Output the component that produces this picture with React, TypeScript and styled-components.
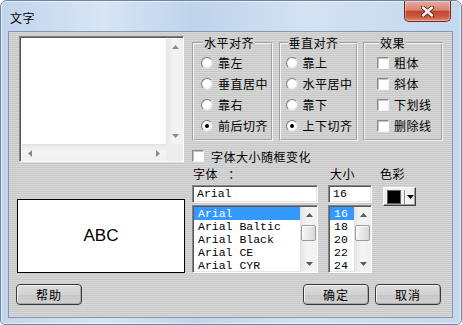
import React from 'react';
import styled, { createGlobalStyle, css } from 'styled-components';

const cjk = `"Noto Sans CJK SC", "Liberation Sans", sans-serif`;
const mono = `"Liberation Mono", "DejaVu Sans Mono", monospace`;

const GlobalStyle = createGlobalStyle`
  html, body { margin: 0; padding: 0; background: #fff; }
  body { font-family: ${cjk}; font-size: 12px; color: #000; }
`;

const sunken = css`
  box-sizing: border-box;
  border: 1px solid;
  border-color: #848484 #fff #fff #848484;
  box-shadow: inset 1px 1px 0 #5a5a5a, inset -1px -1px 0 #e4e4e4;
`;

const Window = styled.div`
  width: 462px;
  height: 325px;
  box-sizing: border-box;
  border: 1px solid #6b86a7;
  border-radius: 7px 7px 5px 5px;
  background: linear-gradient(90deg, #c1d5ec 0%, #d7e5f5 22%, #bfd3eb 42%, #d3e2f3 66%, #c5d8ee 100%);
  display: flex;
  flex-direction: column;
  overflow: hidden;
  box-shadow: inset 0 0 0 1px rgba(255, 255, 255, 0.55);
`;

const TitleBar = styled.div`
  height: 30px;
  flex: none;
  display: flex;
  align-items: flex-start;
  justify-content: space-between;
  padding-left: 9px;
`;

const Title = styled.span`
  font-family: ${cjk};
  font-size: 12px;
  line-height: 14px;
  margin-top: 10px;
  letter-spacing: 0.5px;
`;

const CloseButton = styled.div`
  width: 47px;
  height: 21px;
  margin-right: 10px;
  box-sizing: border-box;
  border: 1px solid #6e2a20;
  border-top: none;
  border-radius: 0 0 5px 5px;
  background: linear-gradient(#eaaa9c, #d98470 45%, #c2452e 52%, #c95b42 80%, #de8c74);
  box-shadow: inset 0 0 0 1px rgba(255, 255, 255, 0.35);
  display: flex;
  align-items: center;
  justify-content: center;
`;

const Client = styled.div`
  flex: 1;
  margin: 0 8px 6px 7px;
  border: 1px solid #8796aa;
  background: repeating-linear-gradient(to bottom, #d8d8d8 0 1px, #c8c8c8 1px 2px);
  display: flex;
  flex-direction: column;
  padding: 4px 0 0 10px;
`;

const Main = styled.div`
  display: flex;
  gap: 8px;
`;

const LeftColumn = styled.div`
  width: 165px;
  display: flex;
  flex-direction: column;
`;

const TextArea = styled.div`
  ${sunken};
  height: 126px;
  background: #fff;
  display: grid;
  grid-template-columns: 1fr 17px;
  grid-template-rows: 1fr 17px;
  padding: 2px 0 0 2px;
`;

const Corner = styled.div`
  background: #ececec;
`;

const Preview = styled.div`
  margin: 37px 0 0 -2px;
  width: 168px;
  height: 74px;
  box-sizing: border-box;
  border: 1px solid #000;
  background: #fff;
  display: flex;
  align-items: center;
  justify-content: center;
  font-family: "Liberation Sans", Arial, sans-serif;
  font-size: 17px;
`;

const RightColumn = styled.div`
  width: 251px;
  display: flex;
  flex-direction: column;
`;

const Groups = styled.div`
  display: flex;
  justify-content: space-between;
`;

const Group = styled.fieldset<{ $w: number; $pad: number }>`
  width: ${(p) => p.$w}px;
  box-sizing: border-box;
  margin: 0;
  padding: 2px 0 3px ${(p) => p.$pad}px;
  border: 2px groove #f4f4f4;
  min-width: 0;
`;

const Legend = styled.legend`
  font-family: ${cjk};
  font-size: 12px;
  line-height: 14px;
  padding: 0 1px;
  margin-left: 2px;
  letter-spacing: 0.5px;
`;

const OptionRow = styled.div`
  height: 21px;
  display: flex;
  align-items: center;
  gap: 5px;
  white-space: nowrap;
  letter-spacing: 0.5px;
`;

const Radio = styled.span<{ $on?: boolean }>`
  width: 12px;
  height: 12px;
  box-sizing: border-box;
  border-radius: 50%;
  border: 1px solid;
  border-color: #7c7c7c #dcdcdc #dcdcdc #7c7c7c;
  background: radial-gradient(circle at 45% 45%, #fff 40%, #e2e2e2 100%);
  display: flex;
  align-items: center;
  justify-content: center;
  &::after {
    content: '';
    width: 4px;
    height: 4px;
    border-radius: 50%;
    background: ${(p) => (p.$on ? '#000' : 'transparent')};
  }
`;

const Check = styled.span`
  width: 12px;
  height: 12px;
  flex: none;
  box-sizing: border-box;
  border: 1px solid;
  border-color: #8a8a8a #f4f4f4 #f4f4f4 #8a8a8a;
  box-shadow: inset 1px 1px 0 #c4c4c4;
  background: #fff;
`;

const AutoSizeRow = styled.div`
  margin-top: 8px;
  height: 14px;
  display: flex;
  align-items: center;
  gap: 7px;
  letter-spacing: 0.5px;
`;

const FontArea = styled.div`
  display: flex;
  margin-top: 4px;
`;

const Field = styled.div<{ $w: number; $gap: number }>`
  width: ${(p) => p.$w}px;
  margin-right: ${(p) => p.$gap}px;
  display: flex;
  flex-direction: column;
`;

const Label = styled.div<{ $shift?: number }>`
  height: 14px;
  line-height: 14px;
  letter-spacing: 0.5px;
  word-spacing: 7px;
  margin-left: ${(p) => p.$shift ?? 1}px;
  white-space: pre;
`;

const Input = styled.div`
  ${sunken};
  margin-top: 4px;
  height: 18px;
  background: #fff;
  font-family: ${mono};
  font-size: 11.5px;
  line-height: 16px;
  padding-left: 4px;
`;

const List = styled.div`
  ${sunken};
  margin-top: 2px;
  height: 68px;
  background: #fff;
  display: flex;
  padding: 1px 0 0 1px;
`;

const Items = styled.div`
  flex: 1;
  overflow: hidden;
`;

const Item = styled.div<{ $sel?: boolean }>`
  font-family: ${mono};
  font-size: 11.5px;
  line-height: 13px;
  height: 13px;
  padding-left: 4px;
  white-space: nowrap;
  background: ${(p) => (p.$sel ? '#3399ff' : 'transparent')};
  color: ${(p) => (p.$sel ? '#fff' : '#000')};
`;

const VScroll = styled.div`
  width: 17px;
  display: flex;
  flex-direction: column;
  background: linear-gradient(90deg, #e6e6e6, #f4f4f4 40%, #f0f0f0);
  border-left: 1px solid #e2e2e2;
  box-sizing: border-box;
`;

const HScroll = styled.div`
  height: 17px;
  display: flex;
  background: linear-gradient(#e6e6e6, #f4f4f4 40%, #f0f0f0);
  border-top: 1px solid #e2e2e2;
  box-sizing: border-box;
`;

const Arrow = styled.div`
  width: 16px;
  height: 16px;
  flex: none;
  display: flex;
  align-items: center;
  justify-content: center;
`;

const Track = styled.div`
  flex: 1;
  padding-top: 2px;
`;

const Thumb = styled.div`
  width: 15px;
  height: 16px;
  box-sizing: border-box;
  border: 1px solid #9a9a9a;
  border-radius: 2px;
  background: linear-gradient(90deg, #f6f6f6, #e8e8e8 50%, #d8d8d8);
  box-shadow: inset 1px 1px 0 #fff;
`;

const ColorButton = styled.div`
  margin: 6px 0 0 3px;
  width: 33px;
  height: 19px;
  box-sizing: border-box;
  border: 1px solid;
  border-color: #fff #404040 #404040 #fff;
  box-shadow: inset -1px -1px 0 #a0a0a0;
  background: #f0f0f0;
  display: flex;
  align-items: center;
  padding-left: 3px;
`;

const Swatch = styled.span<{ $color: string }>`
  width: 14px;
  height: 14px;
  box-sizing: border-box;
  border: 1px solid #606060;
  background: ${(p) => p.$color};
`;

const Divider = styled.span`
  width: 1px;
  height: 14px;
  margin: 0 2px 0 3px;
  background: #8a8a8a;
  box-shadow: 1px 0 0 #fff;
`;

const ButtonRow = styled.div`
  margin-top: 11px;
  display: flex;
  gap: 6px;
  padding: 0 11px 0 7px;
  margin-left: -10px;
`;

const Spacer = styled.div`
  flex: 1;
`;

const Button = styled.div`
  width: 66px;
  height: 21px;
  box-sizing: border-box;
  border: 1px solid #3a3a3a;
  border-radius: 4px;
  background: linear-gradient(#dcdcdc, #d2d2d2 50%, #c8c8c8 52%, #d0d0d0);
  box-shadow: inset 1px 1px 0 #f4f4f4, inset -1px -1px 0 #a8a8a8;
  display: flex;
  align-items: center;
  justify-content: center;
  letter-spacing: 1px;
  font-size: 12px;
`;

type Dir = 'up' | 'down' | 'left' | 'right';

function Tri({ dir, color = '#5a5a5a' }: { dir: Dir; color?: string }) {
  const pts: Record<Dir, string> = {
    up: '0,4 3.5,0 7,4',
    down: '0,0 3.5,4 7,0',
    left: '4,0 0,3.5 4,7',
    right: '0,0 4,3.5 0,7',
  };
  const vertical = dir === 'up' || dir === 'down';
  return (
    <svg width={vertical ? 7 : 4} height={vertical ? 4 : 7} viewBox={vertical ? '0 0 7 4' : '0 0 4 7'}>
      <polygon points={pts[dir]} fill={color} />
    </svg>
  );
}

function VBar({ thumb, color }: { thumb?: boolean; color?: string }) {
  return (
    <VScroll>
      <Arrow>
        <Tri dir="up" color={color} />
      </Arrow>
      <Track>{thumb && <Thumb />}</Track>
      <Arrow>
        <Tri dir="down" color={color} />
      </Arrow>
    </VScroll>
  );
}

function Radios({ options, checked }: { options: string[]; checked: number }) {
  return (
    <>
      {options.map((o, i) => (
        <OptionRow key={o}>
          <Radio $on={i === checked} />
          {o}
        </OptionRow>
      ))}
    </>
  );
}

const fonts = ['Arial', 'Arial Baltic', 'Arial Black', 'Arial CE', 'Arial CYR'];
const sizes = ['16', '18', '20', '22', '24'];

export default function App() {
  return (
    <>
      <GlobalStyle />
      <Window>
        <TitleBar>
          <Title>文字</Title>
          <CloseButton>
            <svg width="13" height="11" viewBox="0 0 13 11">
              <path d="M2 1.5 L11 9.5 M11 1.5 L2 9.5" stroke="#5a1c14" strokeWidth="4.2" strokeLinecap="round" />
              <path d="M2 1.5 L11 9.5 M11 1.5 L2 9.5" stroke="#fff" strokeWidth="2.4" strokeLinecap="round" />
            </svg>
          </CloseButton>
        </TitleBar>
        <Client>
          <Main>
            <LeftColumn>
              <TextArea>
                <div />
                <VBar color="#8a8a8a" />
                <HScroll>
                  <Arrow>
                    <Tri dir="left" color="#8a8a8a" />
                  </Arrow>
                  <Track />
                  <Arrow>
                    <Tri dir="right" color="#8a8a8a" />
                  </Arrow>
                </HScroll>
                <Corner />
              </TextArea>
              <Preview>ABC</Preview>
            </LeftColumn>
            <RightColumn>
              <Groups>
                <Group $w={81} $pad={7}>
                  <Legend>水平对齐</Legend>
                  <Radios options={['靠左', '垂直居中', '靠右', '前后切齐']} checked={3} />
                </Group>
                <Group $w={79} $pad={5}>
                  <Legend>垂直对齐</Legend>
                  <Radios options={['靠上', '水平居中', '靠下', '上下切齐']} checked={3} />
                </Group>
                <Group $w={80} $pad={12}>
                  <Legend>效果</Legend>
                  {['粗体', '斜体', '下划线', '删除线'].map((o) => (
                    <OptionRow key={o}>
                      <Check />
                      {o}
                    </OptionRow>
                  ))}
                </Group>
              </Groups>
              <AutoSizeRow>
                <Check />
                字体大小随框变化
              </AutoSizeRow>
              <FontArea>
                <Field $w={126} $gap={10}>
                  <Label>{'字体 ：'}</Label>
                  <Input>Arial</Input>
                  <List>
                    <Items>
                      {fonts.map((f, i) => (
                        <Item key={f} $sel={i === 0}>
                          {f}
                        </Item>
                      ))}
                    </Items>
                    <VBar thumb />
                  </List>
                </Field>
                <Field $w={44} $gap={8}>
                  <Label $shift={2}>大小</Label>
                  <Input>16</Input>
                  <List>
                    <Items>
                      {sizes.map((s, i) => (
                        <Item key={s} $sel={i === 0}>
                          {s}
                        </Item>
                      ))}
                    </Items>
                    <VBar thumb />
                  </List>
                </Field>
                <Field $w={36} $gap={0}>
                  <Label $shift={0}>色彩</Label>
                  <ColorButton>
                    <Swatch $color="#000" />
                    <Divider />
                    <Tri dir="down" color="#000" />
                  </ColorButton>
                </Field>
              </FontArea>
            </RightColumn>
          </Main>
          <ButtonRow>
            <Button>帮助</Button>
            <Spacer />
            <Button>确定</Button>
            <Button>取消</Button>
          </ButtonRow>
        </Client>
      </Window>
    </>
  );
}
